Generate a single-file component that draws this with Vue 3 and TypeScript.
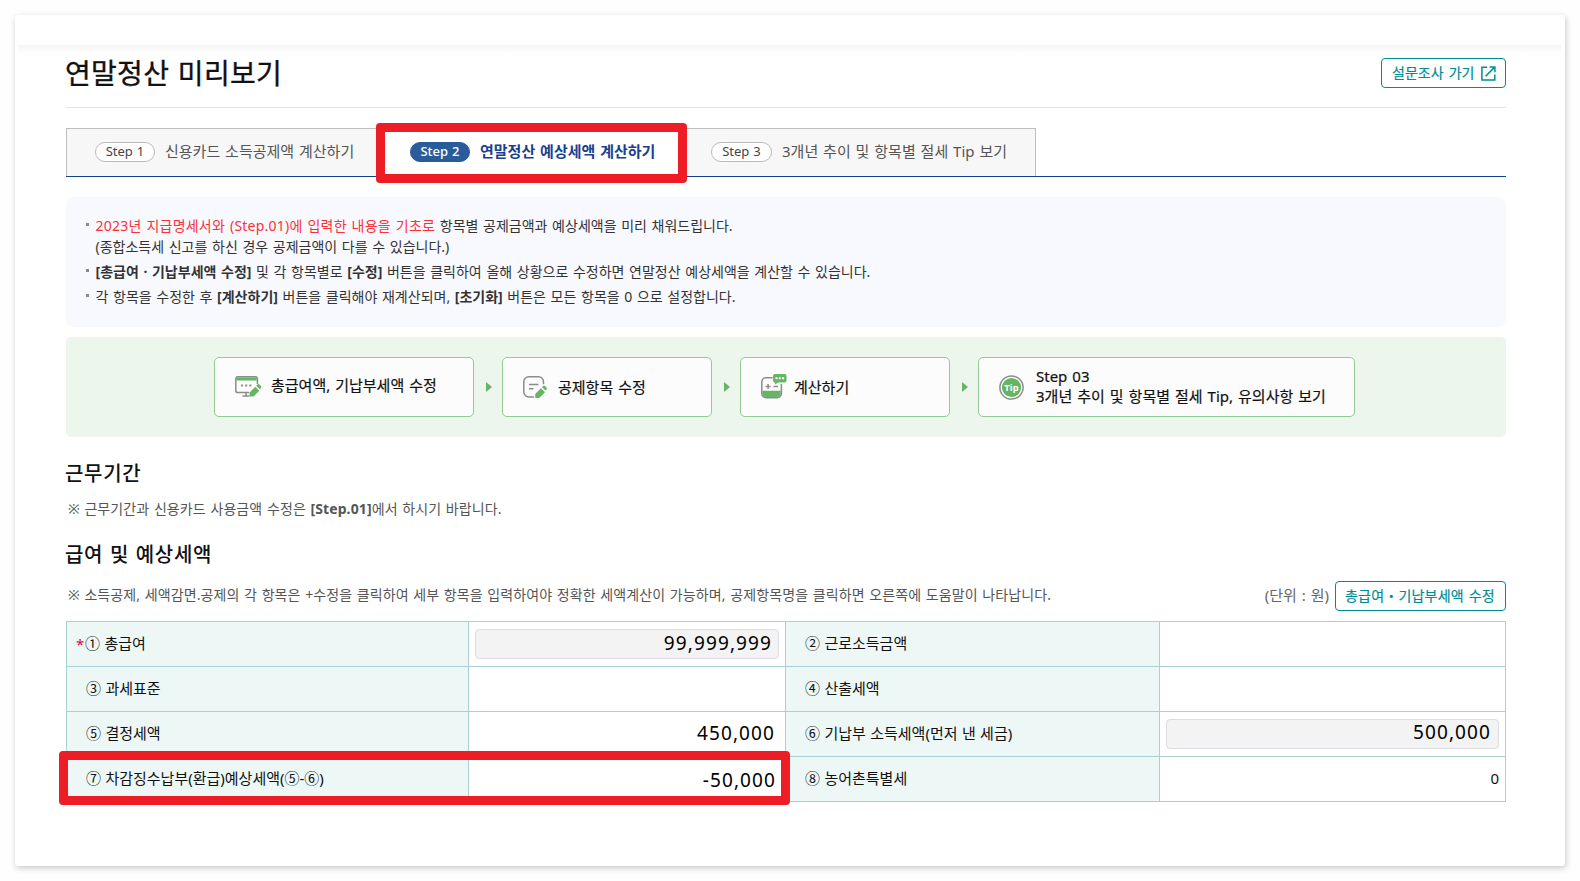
<script setup lang="ts">
interface Cell {
  label: string
  value: string
  kind: 'plain' | 'large' | 'input'
  required?: boolean
}

const rows: [Cell, Cell][] = [
  [
    { label: '① 총급여', value: '99,999,999', kind: 'input', required: true },
    { label: '② 근로소득금액', value: '', kind: 'plain' },
  ],
  [
    { label: '③ 과세표준', value: '', kind: 'plain' },
    { label: '④ 산출세액', value: '', kind: 'plain' },
  ],
  [
    { label: '⑤ 결정세액', value: '450,000', kind: 'large' },
    { label: '⑥ 기납부 소득세액(먼저 낸 세금)', value: '500,000', kind: 'input' },
  ],
  [
    { label: '⑦ 차감징수납부(환급)예상세액(⑤-⑥)', value: '-50,000', kind: 'large' },
    { label: '⑧ 농어촌특별세', value: '0', kind: 'plain' },
  ],
]

const tabs = [
  { step: 'Step 1', title: '신용카드 소득공제액 계산하기', active: false },
  { step: 'Step 2', title: '연말정산 예상세액 계산하기', active: true },
  { step: 'Step 3', title: '3개년 추이 및 항목별 절세 Tip 보기', active: false },
]
</script>

<template>
  <div class="page">
    <main class="sheet">
      <div class="topbar"></div>
      <div class="content">
        <header class="head">
          <h1>연말정산 미리보기</h1>
          <button class="btn survey">
            <span>설문조사 가기</span>
            <svg width="15" height="15" viewBox="0 0 15 15" fill="none" stroke="#008c95" stroke-width="1.5">
              <path d="M6.2 1.2H.9v12.9h12.9V8.6M8.6.9h5.3v5.3M13.7 1.1 4.6 10.3" />
            </svg>
          </button>
        </header>

        <nav class="tabs">
          <div v-for="(tab, i) in tabs" :key="tab.step" class="tab" :class="['tab' + (i + 1), { active: tab.active }]">
            <span class="pill">{{ tab.step }}</span>
            <span class="tab-title">{{ tab.title }}</span>
            <i v-if="tab.active" class="mark mark-tab"></i>
          </div>
        </nav>

        <ul class="info">
          <li>
            <em>2023년 지급명세서와 (Step.01)에 입력한 내용을 기초로</em> 항목별 공제금액과 예상세액을 미리 채워드립니다.<br />
            (종합소득세 신고를 하신 경우 공제금액이 다를 수 있습니다.)
          </li>
          <li><b>[총급여 · 기납부세액 수정]</b> 및 각 항목별로 <b>[수정]</b> 버튼을 클릭하여 올해 상황으로 수정하면 연말정산 예상세액을 계산할 수 있습니다.</li>
          <li>각 항목을 수정한 후 <b>[계산하기]</b> 버튼을 클릭해야 재계산되며, <b>[초기화]</b> 버튼은 모든 항목을 0 으로 설정합니다.</li>
        </ul>

        <section class="flow">
          <div class="card c1">
            <svg class="ic" width="28" height="22" viewBox="0 0 28 22">
              <path d="M3 .8h17.2a2.2 2.2 0 0 1 2.2 2.2v5M14 16.6H3A2.2 2.2 0 0 1 .8 14.4V3A2.2 2.2 0 0 1 3 .8M11 17v3M7.5 20h7" fill="none" stroke="#8c8c8c" stroke-width="1.5" />
              <path d="M1.5 1.5h20.2v3H1.5z" fill="#64b564" />
              <path d="M6 8.5h2v2H6zM10.2 8.5h2v2h-2zM14.4 8.5h2v2h-2z" fill="#8c8c8c" />
              <path d="M14.5 20.500v-4l5.800-5.800 4 4-5.800 5.800zM21.200 9.800l1.600-1.500q.8-.5 1.600.2l1.500 1.500q.8.9.2 1.700l-1.200 1.500z" fill="#64b564" />
            </svg>
            <span>총급여액, 기납부세액 수정</span>
          </div>
          <i class="arrow"></i>
          <div class="card c2">
            <svg class="ic" width="25" height="23" viewBox="0 0 25 23">
              <path d="M11 21H5.800a5 5 0 0 1-5-5V5.800a5 5 0 0 1 5-5h9.700a5 5 0 0 1 5 5v2.500M6 8.400h9.500M6 12.800h4.500" fill="none" stroke="#8c8c8c" stroke-width="1.5" />
              <path d="M12.200 22v-4l5.800-5.800 4 4-5.800 5.800zM18.900 11.200l1.500-1.400q.8-.5 1.600.2l1.500 1.500q.8.9.2 1.700l-1.100 1.400z" fill="#64b564" />
            </svg>
            <span>공제항목 수정</span>
          </div>
          <i class="arrow"></i>
          <div class="card c3">
            <svg class="ic" width="26" height="25" viewBox="0 0 26 25">
              <path d="M11.500 3.800H5a4.200 4.200 0 0 0-4.200 4.200v11.500A4.200 4.200 0 0 0 5 23.700h11.200a4.200 4.200 0 0 0 4.200-4.200V10" fill="none" stroke="#8c8c8c" stroke-width="1.5" />
              <path d="M1.500 16.800h18.200v2.700q0 3.500-3.500 3.500H5q-3.500 0-3.500-3.500z" fill="#64b564" />
              <path d="M4.600 12.400h5M7.100 9.900v5M12.500 12.400h4.500" fill="none" stroke="#8c8c8c" stroke-width="1.5" />
              <path d="M14 0h9.500Q25.500 0 25.500 2v4.500q0 2-2 2H17l-3 2v-2q-2-.2-2-2V2q0-2 2-2z" fill="#64b564" />
              <path d="M14.500 3.300h2v2h-2zM17.800 3.300h2v2h-2zM21.100 3.300h2v2h-2z" fill="#fff" />
            </svg>
            <span>계산하기</span>
          </div>
          <i class="arrow"></i>
          <div class="card c4">
            <svg class="ic" width="25" height="25" viewBox="0 0 25 25">
              <circle cx="12.5" cy="12.5" r="11.6" fill="#fff" stroke="#8c8c8c" stroke-width="1.5" />
              <circle cx="12.5" cy="12.5" r="9.6" fill="#64b564" />
              <text x="12.5" y="15.9" text-anchor="middle" fill="#fff" class="tip">Tip</text>
            </svg>
            <span>Step 03<br />3개년 추이 및 항목별 절세 Tip, 유의사항 보기</span>
          </div>
        </section>

        <h2 class="h-period">근무기간</h2>
        <p class="note n1">※ 근무기간과 신용카드 사용금액 수정은 <b>[Step.01]</b>에서 하시기 바랍니다.</p>

        <h2 class="h-pay">급여 및 예상세액</h2>
        <div class="noterow">
          <p class="note n2">※ 소득공제, 세액감면.공제의 각 항목은 +수정을 클릭하여 세부 항목을 입력하여야 정확한 세액계산이 가능하며, 공제항목명을 클릭하면 오른쪽에 도움말이 나타납니다.</p>
          <span class="unit">(단위 : 원)</span>
          <button class="btn edit"><span>총급여・기납부세액 수정</span></button>
        </div>

        <div class="grid">
          <template v-for="(row, r) in rows" :key="r">
            <template v-for="(cell, c) in row" :key="c">
              <div class="th">
                <span v-if="cell.required" class="req">*</span>
                <span class="label">{{ cell.label }}</span>
              </div>
              <div class="td" :class="cell.kind">
                <span :class="['val', 'v' + r + c]">{{ cell.value }}</span>
              </div>
            </template>
          </template>
          <i class="mark mark-row"></i>
        </div>
      </div>
    </main>
  </div>
</template>

<style>
body {
  margin: 0;
  background: #fefefe;
}
</style>

<style scoped>
* {
  box-sizing: border-box;
}
.page {
  width: 1580px;
  height: 881px;
  padding: 15px;
  overflow: hidden;
  font-family: "Noto Sans", "Noto Sans CJK KR", sans-serif;
  color: #111;
}
.sheet {
  width: 1550px;
  height: 851px;
  background: #fff;
  border-radius: 3px;
  box-shadow: 1px 2px 6px rgba(0, 0, 0, 0.22);
}
.topbar {
  height: 38px;
  margin: 0 4px 0 3px;
  padding-top: 30px;
}
.topbar::after {
  content: "";
  display: block;
  height: 9px;
  background: linear-gradient(#f5f5f5, #fff);
}
.content {
  width: 1440px;
  margin-left: 51px;
}
h1,
h2,
p,
ul {
  margin: 0;
  padding: 0;
}
.head {
  display: flex;
  justify-content: space-between;
  height: 55px;
  padding-top: 5px;
  border-bottom: 1px solid #e3e3e3;
}
h1 {
  margin-left: -1px;
  font-size: 28px;
  line-height: 30px;
  font-weight: 400;
  letter-spacing: 0.3px;
  word-spacing: 1px;
  -webkit-text-stroke: 0.35px #111;
}
.btn {
  display: flex;
  align-items: center;
  flex: none;
  height: 30px;
  padding: 0 0 1px 10px;
  border: 1px solid #008c95;
  border-radius: 4px;
  background: #fff;
  color: #008c95;
  font: 400 14px/26px "Noto Sans", "Noto Sans CJK KR", sans-serif;
  -webkit-text-stroke: 0.2px #008c95;
  white-space: nowrap;
}
.survey {
  width: 125px;
  word-spacing: 1.5px;
}
.survey svg {
  margin: 1px 0 0 7px;
}
.tabs {
  display: flex;
  height: 49px;
  margin-top: 20px;
  border-bottom: 1px solid #164193;
}
.tab {
  position: relative;
  display: flex;
  align-items: center;
  height: 48px;
  padding: 0 0 4px 28px;
  border-top: 1px solid #bfbfbf;
  background: #f7f7f7;
  color: #555;
  font-size: 15px;
  line-height: 22px;
  word-spacing: 1px;
  white-space: nowrap;
}
.tab1 {
  width: 315px;
  border-left: 1px solid #bfbfbf;
}
.tab2 {
  width: 302px;
  padding-left: 29px;
}
.tab3 {
  width: 353px;
  border-right: 1px solid #bfbfbf;
}
.tab.active {
  background: #fff;
  color: #1b3f8f;
  font-weight: 700;
}
.pill {
  width: 60px;
  height: 20px;
  margin-top: 3px;
  border: 1px solid #bbb;
  border-radius: 10px;
  background: #fff;
  color: #444;
  font-size: 13px;
  line-height: 17px;
  font-weight: 400;
  text-align: center;
  word-spacing: 0.6px;
}
.tab3 .pill {
  width: 61px;
}
.active .pill {
  border-color: #2a5c99;
  background: #2a5c99;
  color: #fff;
  font-weight: 500;
}
.tab-title {
  margin-left: 10px;
}
.mark {
  position: absolute;
  border: 9px solid #ee1c25;
  border-radius: 4px;
}
.mark-tab {
  z-index: 2;
  left: -5px;
  top: -6px;
  width: 311px;
  height: 60px;
}
.info {
  height: 130px;
  margin-top: 20px;
  padding: 18px 0 0 29.5px;
  border-radius: 8px;
  background: #f8f9fe;
  color: #333;
  font-size: 14px;
  line-height: 21px;
  word-spacing: 1px;
  list-style: none;
  white-space: nowrap;
}
.info li {
  position: relative;
  margin-bottom: 4px;
}
.info li::before {
  content: "";
  position: absolute;
  left: -9.5px;
  top: 8px;
  width: 3px;
  height: 3px;
  background: #888;
}
.info em {
  color: #fa3238;
  font-style: normal;
  letter-spacing: 0.23px;
}
.flow {
  display: flex;
  align-items: center;
  height: 100px;
  margin-top: 10px;
  padding-left: 148px;
  border-radius: 5px;
  background: #ecf6ed;
}
.card {
  display: flex;
  align-items: center;
  height: 60px;
  padding-left: 20px;
  border: 1px solid #93ca95;
  border-radius: 5px;
  background: #fcfcfc;
  font-size: 15px;
  line-height: 20px;
  word-spacing: 1.1px;
  -webkit-text-stroke: 0.2px #111;
  white-space: nowrap;
}
.ic {
  -webkit-text-stroke: 0;
}
.c1 { width: 260px; }
.c1 span { margin: -4px 0 0 8px; }
.c2 { width: 210px; }
.c2 span { margin-left: 10px; }
.c3 { width: 210px; }
.c3 .ic { margin-top: -2px; }
.c3 span { margin-left: 7px; }
.c4 { width: 377px; }
.c4 span { margin: -2px 0 0 12px; }
.tip {
  font: 700 9.5px "Noto Sans", sans-serif;
}
.arrow {
  width: 28px;
  padding-left: 12px;
}
.arrow::before {
  content: "";
  display: block;
  width: 6px;
  height: 10px;
  background: #64b564;
  clip-path: polygon(0 0, 100% 50%, 0 100%);
}
h2 {
  position: relative;
  margin-left: -1px;
  font-size: 20px;
  line-height: 32px;
  height: 30px;
  font-weight: 500;
  letter-spacing: 0.7px;
  word-spacing: 0.8px;
}
.h-period {
  margin-top: 21px;
}
.note {
  padding-left: 2px;
  color: #555;
  font-size: 14px;
  line-height: 20px;
  letter-spacing: 0.11px;
  word-spacing: 0.8px;
  white-space: nowrap;
}
.n1 {
  height: 20px;
  margin-top: 10px;
  line-height: 22px;
}
.h-pay {
  margin-top: 21px;
}
.noterow {
  display: flex;
  align-items: center;
  height: 30px;
  margin-top: 12px;
}
.n2 {
  flex: 1;
  margin-top: -2px;
}
.unit {
  margin: -3px 6px 0 0;
  color: #666;
  font-size: 15px;
  word-spacing: 1px;
}
.edit {
  width: 171px;
  padding-left: 9px;
  letter-spacing: 0.2px;
  word-spacing: 1px;
}
.grid {
  position: relative;
  display: grid;
  grid-template-columns: 402px 317px 374px 346px;
  grid-auto-rows: 45px;
  margin-top: 10px;
  border-top: 1px solid #abd0d4;
  border-left: 1px solid #abd0d4;
}
.th,
.td {
  display: flex;
  align-items: center;
  border-right: 1px solid #abd0d4;
  border-bottom: 1px solid #abd0d4;
}
.th {
  padding: 0 0 3px 19px;
  background: #edf7f6;
  font-size: 15px;
  line-height: 22px;
  word-spacing: 0.5px;
}
.req {
  width: 10px;
  margin: 3px 0 0 -10px;
  color: #e5003c;
}
.req + .label {
  margin-left: -1px;
}
.td {
  justify-content: flex-end;
  padding: 0 6px;
  font-size: 15px;
}
.plain {
  padding-bottom: 3px;
}
.large,
.input {
  color: #000;
  font: 19px "Noto Sans", sans-serif;
  letter-spacing: 1.1px;
}
.large {
  padding: 0 10px 2px 0;
}
.large .v30 {
  margin: 3px -1px 0 0;
}
.input .val {
  display: block;
  flex: 1;
  height: 30px;
  padding-right: 6px;
  border: 1px solid #dcdce2;
  border-radius: 4px;
  background: #f3f3f3;
  line-height: 27px;
  text-align: right;
}
.input .v21 {
  padding-right: 7px;
  line-height: 25px;
}
.mark-row {
  left: -8px;
  top: 129px;
  width: 731px;
  height: 54px;
}
</style>
